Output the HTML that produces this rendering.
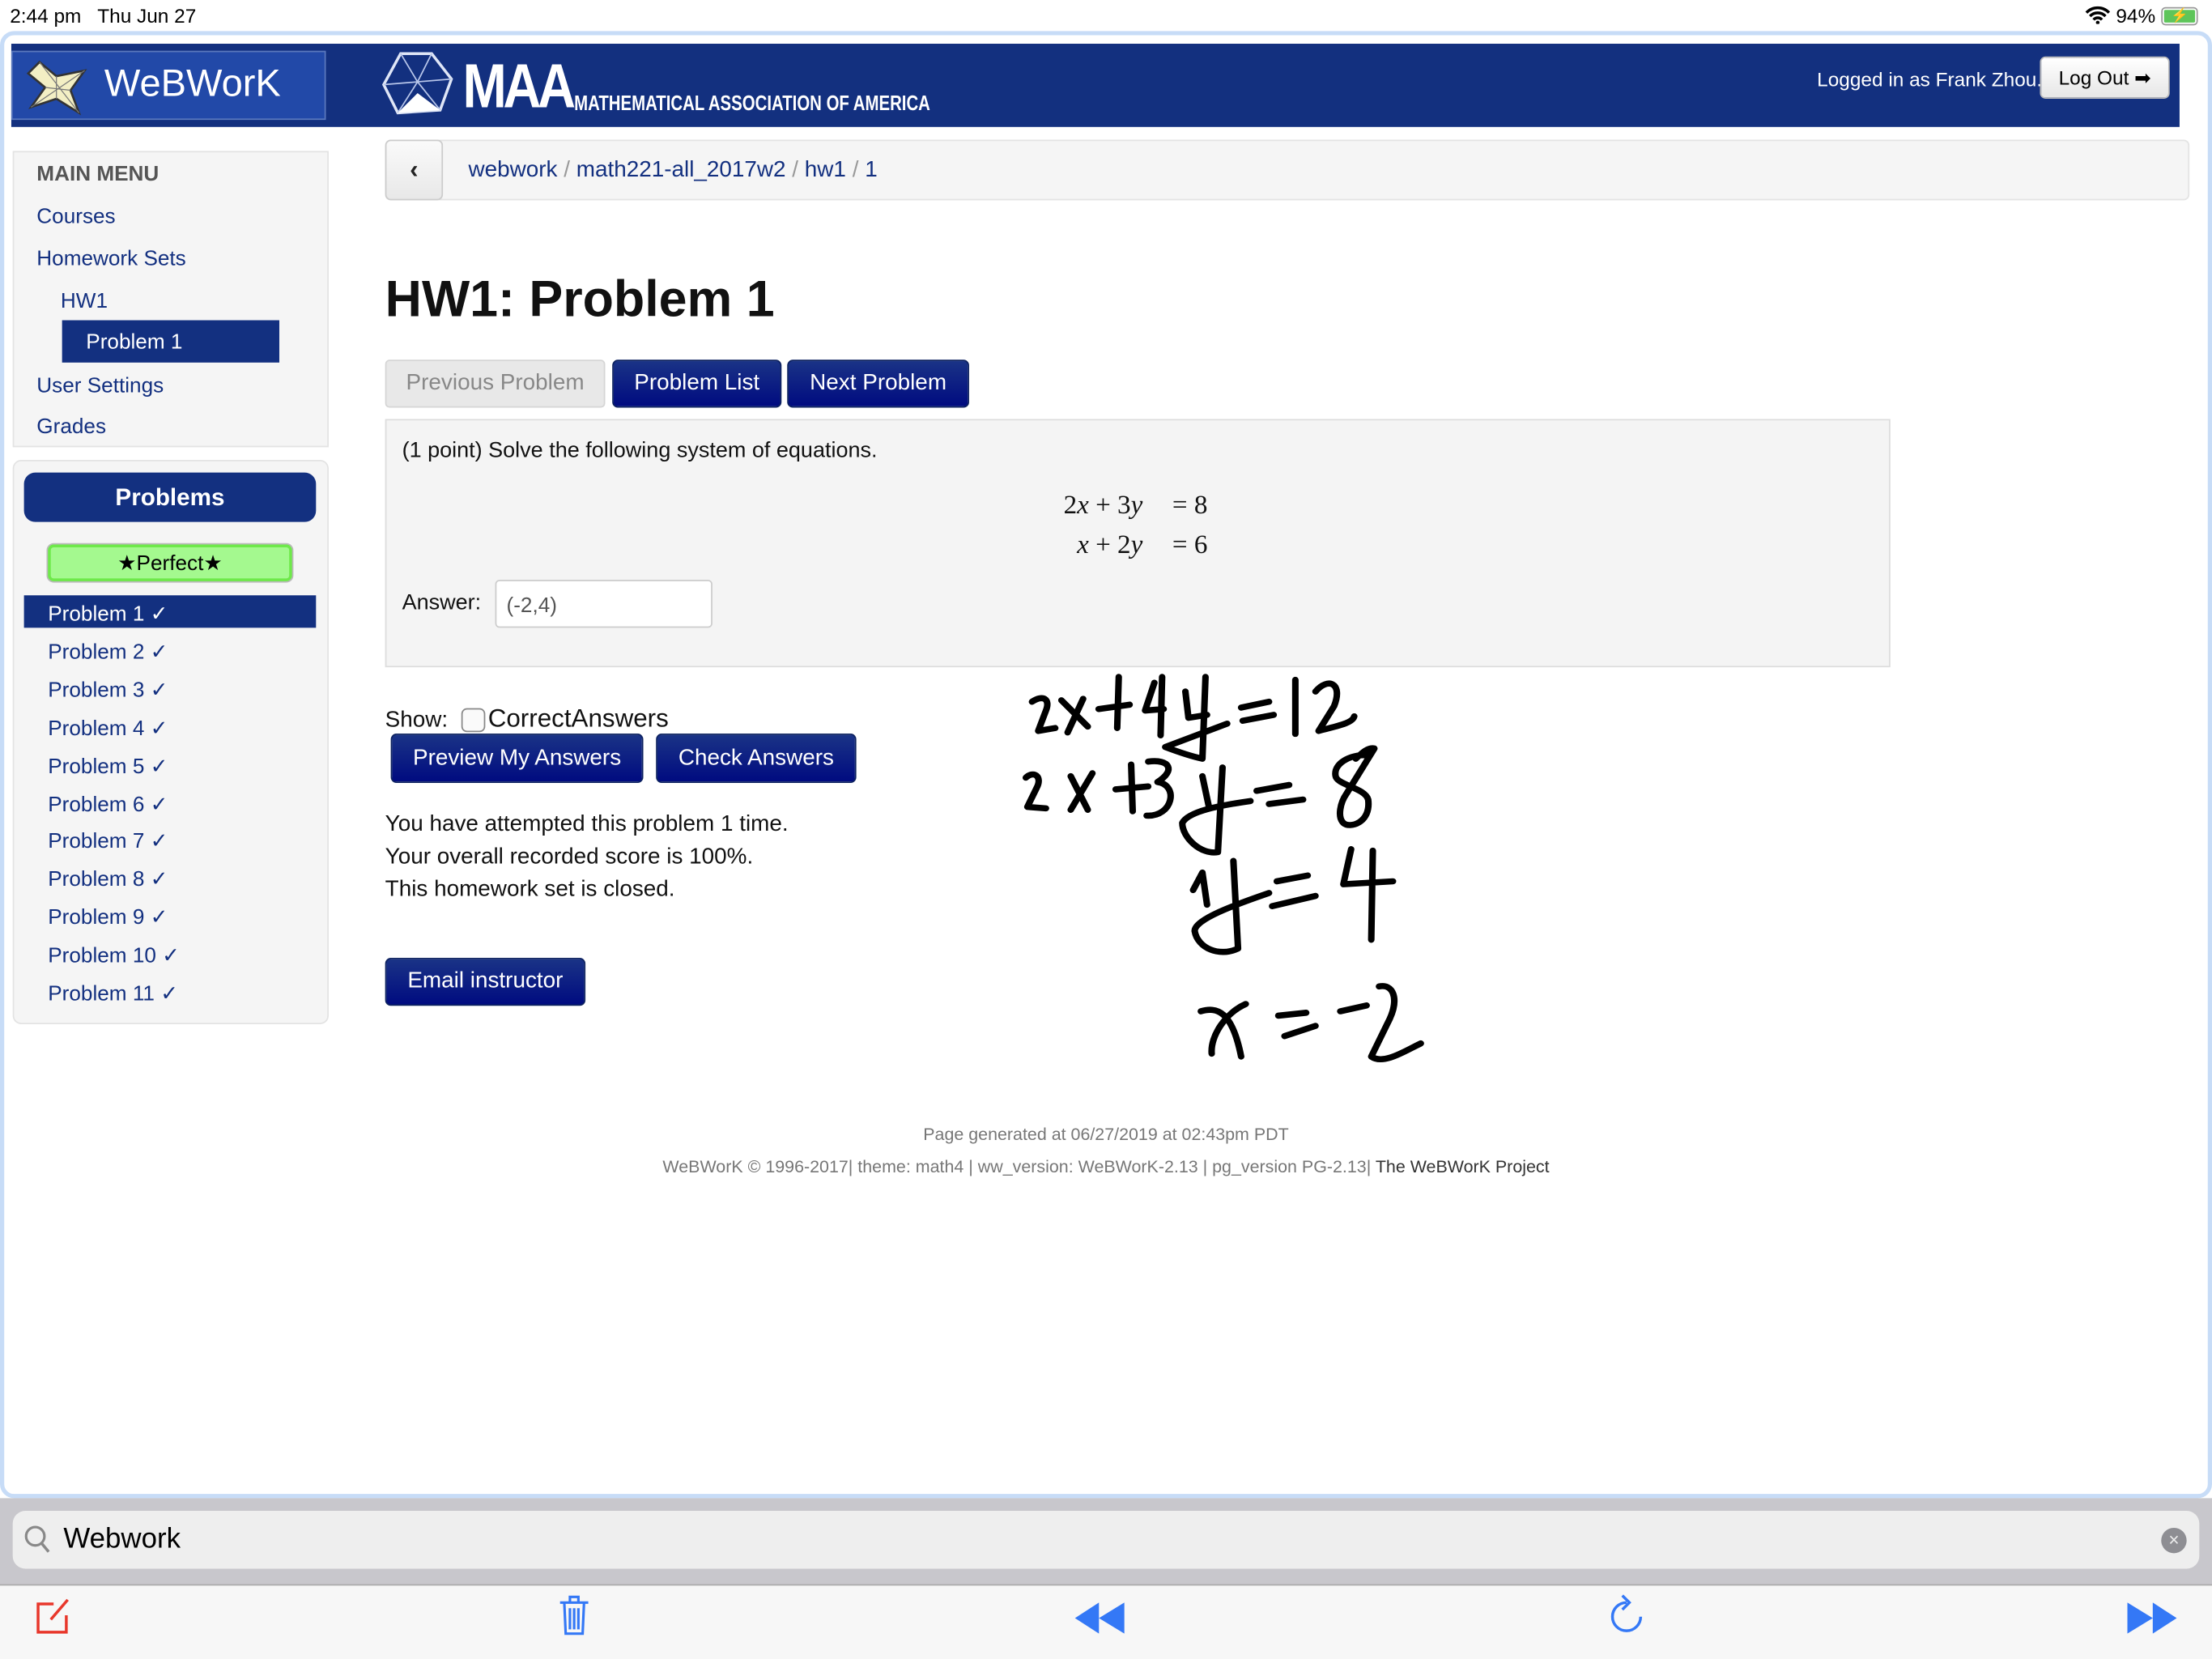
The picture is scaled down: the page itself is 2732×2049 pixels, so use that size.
<!DOCTYPE html>
<html><head><meta charset="utf-8"><style>
*{box-sizing:border-box;margin:0;padding:0}
html,body{width:2732px;height:2048px;overflow:hidden;background:#fff}
body{font-family:"Liberation Sans",Arial,sans-serif;color:#222}
#w{position:absolute;left:0;top:0;width:1568px;height:1176px;transform:scale(1.74235);transform-origin:0 0}
.a{position:absolute}
a,.lnk{color:#133080;text-decoration:none}
.btn{position:absolute;background:linear-gradient(#1a3386,#000b80);color:#fff;border-radius:4px;font-size:16px;text-align:center;border:1px solid #0d2260}
.pl{position:absolute;left:34px;font-size:15px;color:#133080}
</style></head><body><div id="w">
<div class="a" style="left:7px;top:3px;font-size:14px;color:#000">2:44 pm&nbsp;&nbsp; Thu Jun 27</div>
<div class="a" style="left:1478px;top:3px;font-size:14px;color:#000">
<svg width="18" height="13" viewBox="0 0 18 13" style="vertical-align:-1px"><path d="M1 5a11 11 0 0 1 16 0M3.5 7.5a7.5 7.5 0 0 1 11 0M6 10a4 4 0 0 1 6 0" stroke="#000" stroke-width="2" fill="none"/><circle cx="9" cy="12" r="1.3"/></svg> 94%</div>
<div class="a" style="left:1532px;top:5px;width:26px;height:13px;border:1px solid #999;border-radius:3px;padding:1px"><div style="width:100%;height:100%;background:#5ec55a;border-radius:1px;color:#000;font-size:10px;line-height:9px;text-align:center">&#x26A1;</div></div>
<div class="a" style="left:0;top:22px;width:1568px;height:1040px;border:3px solid #c7dcf7;border-radius:10px;background:#fff"></div>
<div class="a" style="left:8px;top:31px;width:1537px;height:59px;background:#13307f"></div>
<div class="a" style="left:8px;top:36px;width:223px;height:49px;background:#2249a8;border:1px solid #5a78bd"></div>
<svg class="a" style="left:16px;top:40px" width="52" height="44" viewBox="0 0 52 44"><path d="M12 4 L24 14 L44 10 L34 24 L40 40 L24 30 L6 36 L16 22 L4 12 Z" fill="#f3efc4" stroke="#333" stroke-width="1.5"/><path d="M24 14L24 30M16 22L34 24M12 4L40 40M44 10L6 36" stroke="#777" stroke-width=".7"/></svg>
<div class="a" style="left:74px;top:44px;font-size:27px;color:#fff">WeBWorK</div>
<svg class="a" style="left:270px;top:36px" width="52" height="46" viewBox="0 0 52 46"><path d="M14 2 L36 2 L50 20 L42 42 L12 44 L2 24 Z" fill="none" stroke="#dfe6f7" stroke-width="2"/><path d="M14 2L26 22L36 2M2 24L26 22L50 20M12 44L26 22L42 42" stroke="#b8c6ea" stroke-width="1" fill="none"/><path d="M12 44 L26 30 L42 42Z" fill="#fff"/></svg>
<div class="a" style="left:328px;top:37px;font-size:44px;font-weight:bold;color:#fff;letter-spacing:-3px;transform:scaleX(.85);transform-origin:0 0">MAA</div>
<div class="a" style="left:407px;top:65px;font-size:15px;font-weight:bold;color:#fff;transform:scaleX(.78);transform-origin:0 0;white-space:nowrap">MATHEMATICAL ASSOCIATION OF AMERICA</div>
<div class="a" style="left:1288px;top:48px;font-size:14px;color:#fff">Logged in as Frank Zhou.</div>
<div class="a" style="left:1446px;top:40px;width:92px;height:30px;background:linear-gradient(#fff,#e6e6e6);border:1px solid #bbb;border-radius:4px;font-size:14px;color:#000;text-align:center;line-height:28px">Log Out &#x27A1;</div>
<div class="a" style="left:9px;top:107px;width:224px;height:210px;background:#f5f5f5;border:1px solid #e3e3e3"></div>
<div class="a" style="left:26px;top:115px;font-size:15px;font-weight:bold;color:#555">MAIN MENU</div>
<div class="a lnk" style="left:26px;top:145px;font-size:15px">Courses</div>
<div class="a lnk" style="left:26px;top:175px;font-size:15px">Homework Sets</div>
<div class="a lnk" style="left:43px;top:205px;font-size:15px">HW1</div>
<div class="a" style="left:44px;top:227px;width:154px;height:30px;background:#133080;color:#fff;font-size:15px;padding:7px 0 0 17px">Problem 1</div>
<div class="a lnk" style="left:26px;top:265px;font-size:15px">User Settings</div>
<div class="a lnk" style="left:26px;top:294px;font-size:15px">Grades</div>
<div class="a" style="left:9px;top:326px;width:224px;height:400px;background:#f5f5f5;border:1px solid #e3e3e3;border-radius:6px"></div>
<div class="a" style="left:17px;top:335px;width:207px;height:35px;background:#133080;border-radius:8px;color:#fff;font-size:17px;font-weight:bold;text-align:center;line-height:35px">Problems</div>
<div class="a" style="left:34px;top:386px;width:173px;height:26px;background:#a4f98f;border:2px solid #6ee94a;border-radius:4px;box-shadow:0 0 0 1px #bbb;font-size:15px;text-align:center;line-height:24px;color:#000">&#9733;Perfect&#9733;</div>
<div class="a" style="left:17px;top:422px;width:207px;height:23px;background:#133080"></div>
<div class="pl" style="top:426px;color:#fff">Problem 1 &#10003;</div>
<div class="pl" style="top:453px">Problem 2 &#10003;</div>
<div class="pl" style="top:480px">Problem 3 &#10003;</div>
<div class="pl" style="top:507px">Problem 4 &#10003;</div>
<div class="pl" style="top:534px">Problem 5 &#10003;</div>
<div class="pl" style="top:561px">Problem 6 &#10003;</div>
<div class="pl" style="top:587px">Problem 7 &#10003;</div>
<div class="pl" style="top:614px">Problem 8 &#10003;</div>
<div class="pl" style="top:641px">Problem 9 &#10003;</div>
<div class="pl" style="top:668px">Problem 10 &#10003;</div>
<div class="pl" style="top:695px">Problem 11 &#10003;</div>
<div class="a" style="left:273px;top:99px;width:1279px;height:43px;background:#f5f5f5;border:1px solid #e3e3e3;border-radius:4px"></div>
<div class="a" style="left:273px;top:99px;width:41px;height:43px;background:linear-gradient(#fafafa,#e8e8e8);border:1px solid #ccc;border-radius:4px;text-align:center;line-height:40px;font-size:18px;font-weight:bold;color:#222">&#8249;</div>
<div class="a" style="left:332px;top:112px;font-size:16px;color:#999"><span class="lnk">webwork</span> / <span class="lnk">math221-all_2017w2</span> / <span class="lnk">hw1</span> / <span class="lnk">1</span></div>
<div class="a" style="left:273px;top:191px;font-size:36px;font-weight:bold;color:#111">HW1: Problem 1</div>
<div class="a" style="left:273px;top:255px;width:156px;height:34px;background:#e8e8e8;border:1px solid #d5d5d5;border-radius:3px;color:#888;font-size:16px;text-align:center;line-height:32px">Previous Problem</div>
<div class="btn" style="left:434px;top:255px;width:120px;height:34px;line-height:32px">Problem List</div>
<div class="btn" style="left:558px;top:255px;width:129px;height:34px;line-height:32px">Next Problem</div>
<div class="a" style="left:273px;top:297px;width:1067px;height:176px;background:#f4f4f4;border:1px solid #ddd"></div>
<div class="a" style="left:285px;top:311px;font-size:15.5px;color:#111">(1 point) Solve the following system of equations.</div>
<div class="a" style="left:700px;top:345px;width:110px;text-align:right;font-family:'Liberation Serif',serif;font-size:19px;line-height:28px;color:#111">2<i>x</i> + 3<i>y</i><br><i>x</i> + 2<i>y</i></div>
<div class="a" style="left:831px;top:345px;font-family:'Liberation Serif',serif;font-size:19px;line-height:28px;color:#111">= 8<br>= 6</div>
<div class="a" style="left:285px;top:419px;font-size:15.5px;color:#111">Answer:</div>
<div class="a" style="left:351px;top:411px;width:154px;height:34px;background:#fff;border:1px solid #ccc;border-radius:3px;font-size:15px;color:#555;padding:9px 0 0 7px">(-2,4)</div>
<div class="a" style="left:273px;top:499px;font-size:16px;color:#111">Show: <span style="display:inline-block;width:17px;height:17px;border:1px solid #888;border-radius:4px;vertical-align:-4px;margin:0 2px 0 5px;background:#fafafa"></span><span style="font-size:18px">CorrectAnswers</span></div>
<div class="btn" style="left:277px;top:520px;width:179px;height:35px;line-height:33px">Preview My Answers</div>
<div class="btn" style="left:465px;top:520px;width:142px;height:35px;line-height:33px">Check Answers</div>
<div class="a" style="left:273px;top:573px;font-size:16px;line-height:23px;color:#111">You have attempted this problem 1 time.<br>Your overall recorded score is 100%.<br>This homework set is closed.</div>
<div class="btn" style="left:273px;top:679px;width:142px;height:34px;line-height:32px">Email instructor</div>
<div class="a" style="left:0;top:797px;width:1568px;text-align:center;font-size:12.3px;color:#777">Page generated at 06/27/2019 at 02:43pm PDT</div>
<div class="a" style="left:0;top:820px;width:1568px;text-align:center;font-size:12.3px;color:#777">WeBWorK © 1996-2017| theme: math4 | ww_version: WeBWorK-2.13 | pg_version PG-2.13| <span style="color:#333">The WeBWorK Project</span></div>
<div class="a" style="left:0;top:1062px;width:1568px;height:62px;background:#c8c7cc;border-bottom:1px solid #aaa"></div>
<div class="a" style="left:9px;top:1071px;width:1550px;height:41px;background:#eee;border-radius:9px"></div>
<svg class="a" style="left:17px;top:1081px" width="20" height="22" viewBox="0 0 20 22"><circle cx="8" cy="8" r="6.5" fill="none" stroke="#888" stroke-width="1.8"/><path d="M12.5 13l5 6" stroke="#888" stroke-width="2"/></svg>
<div class="a" style="left:45px;top:1080px;font-size:20px;color:#000">Webwork</div>
<div class="a" style="left:1532px;top:1083px;width:18px;height:18px;border-radius:50%;background:#8e8e93;color:#eee;font-size:13px;text-align:center;line-height:18px">&#215;</div>
<div class="a" style="left:0;top:1124px;width:1568px;height:52px;background:#f7f7f7"></div>
<svg class="a" style="left:24px;top:1132px" width="28" height="28" viewBox="0 0 28 28"><path d="M14 5H3v20h20V13" fill="none" stroke="#e8372b" stroke-width="2"/><path d="M24 2L12 16" stroke="#e8372b" stroke-width="2"/></svg>
<svg class="a" style="left:395px;top:1130px" width="24" height="30" viewBox="0 0 24 30"><path d="M2 6h20M9 6V2h6v4M5 6l1 22h12l1-22M9 10v15M12 10v15M15 10v15" fill="none" stroke="#3478f6" stroke-width="1.8"/></svg>
<svg class="a" style="left:762px;top:1136px" width="36" height="22" viewBox="0 0 36 22"><path d="M0 11L17 0V22ZM17 11L35 0V22Z" fill="#3478f6"/></svg>
<svg class="a" style="left:1140px;top:1130px" width="26" height="30" viewBox="0 0 26 30"><path d="M13 6A10 10 0 1 0 23 16" fill="none" stroke="#3478f6" stroke-width="2"/><path d="M10 1l5 5-5 5" fill="none" stroke="#3478f6" stroke-width="2"/></svg>
<svg class="a" style="left:1508px;top:1136px" width="36" height="22" viewBox="0 0 36 22"><path d="M0 0L18 11L0 22ZM18 0L35 11L18 22Z" fill="#3478f6"/></svg>
</div>
<svg style="position:absolute;left:1200px;top:800px" width="600" height="550" viewBox="0 0 1568 1525" preserveAspectRatio="none">
<g fill="none" stroke="#000" stroke-width="21" stroke-linecap="round" stroke-linejoin="round">
<path d="M195,185 C230,160 255,175 240,215 L215,285 L270,275"/>
<path d="M290,180 L375,270M360,175 L310,290"/>
<path d="M410,210 L510,195M475,100 L470,275"/>
<path d="M590,120 L560,215 L620,210M615,100 L610,300"/>
<path d="M690,150 L700,240 L760,230M755,100 L745,380 C700,370 650,350 625,340 L825,260"/>
<path d="M870,205 L960,185M875,250 L975,230"/>
<path d="M1045,110 L1045,295"/>
<path d="M1110,150 C1150,100 1200,120 1170,200 L1120,285 C1170,270 1230,260 1235,235"/>
<path d="M175,445 C200,420 230,440 210,480 L180,545 L240,550"/>
<path d="M320,440 L375,555M390,430 L320,555"/>
<path d="M465,485 L570,475M515,400 L520,560"/>
<path d="M570,390 C640,380 660,420 600,460 C670,470 650,580 565,575"/>
<path d="M745,440 L765,540M810,410 L795,700 C740,710 680,650 680,600 C700,560 800,540 900,525"/>
<path d="M920,490 L1025,470M960,535 L1070,520"/>
<path d="M1280,370 C1240,360 1165,390 1175,440 C1180,470 1270,480 1280,520 C1290,600 1220,620 1200,600 C1180,580 1190,530 1210,500 L1300,345 C1280,340 1260,360 1240,380"/>
<path d="M715,830 L745,770 L760,880M845,730 L860,1030 C800,1060 730,1030 720,970 C720,930 850,880 960,840"/>
<path d="M985,800 L1085,780M970,885 L1110,850"/>
<path d="M1225,690 L1200,810 L1360,800M1295,695 L1290,1000"/>
<path d="M740,1245 C790,1230 840,1240 870,1400M885,1220 C820,1250 770,1330 775,1390"/>
<path d="M990,1260 L1080,1250M1010,1330 L1110,1295"/>
<path d="M1190,1245 L1275,1225"/>
<path d="M1315,1160 C1360,1150 1380,1200 1350,1270 L1290,1400 C1330,1430 1400,1380 1450,1355"/>
</g></svg>
</body></html>
